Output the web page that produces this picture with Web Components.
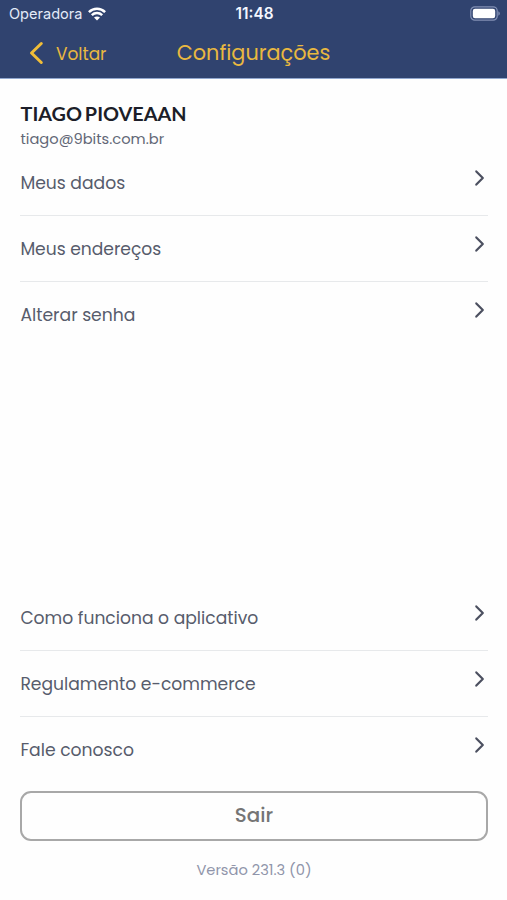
<!DOCTYPE html>
<html lang="pt-BR">
<head>
<meta charset="utf-8">
<meta name="viewport" content="width=device-width, initial-scale=1">
<title>Configurações</title>
<style>
html,body{margin:0;height:100%;background:#fefefe}
body{font-family:Poppins,Inter,"Liberation Sans",sans-serif;overflow:hidden}
</style>
</head>
<body>
<settings-screen></settings-screen>
<script>
const define = (name, html, setup) => customElements.define(name, class extends HTMLElement {
  constructor() {
    super();
    this.attachShadow({ mode: 'open' }).innerHTML = html;
  }
  connectedCallback() { if (setup) setup(this); }
});

// One line of text, sized so that it spans the width given in "span".
define('fitted-text', `<style>
:host{display:block;white-space:nowrap;line-height:22px}
span{display:inline-block}
</style><span></span>`, el => {
  const s = el.shadowRoot.querySelector('span');
  s.textContent = el.getAttribute('label');
  const target = Number(el.getAttribute('span'));
  if (!target) return;
  const size = parseFloat(getComputedStyle(s).fontSize);
  s.style.fontSize = (size * target / s.getBoundingClientRect().width).toFixed(2) + 'px';
});

define('status-bar', `<style>
:host{display:grid;grid-template-columns:1fr auto 1fr;align-items:center;height:27px;padding:0 7px 0 9px;color:#e3eaf8;font:400 14px/1 Inter,sans-serif}
.left{display:flex;align-items:center;gap:6px}
.time{font-weight:600;color:#f4f7ff;margin-top:1px}
.left fitted-text{margin-top:1px}
.battery{justify-self:end;display:block}
svg{display:block}
</style>
<div class="left"><fitted-text label="Operadora" span="73.5"></fitted-text>
<svg width="18" height="14" viewBox="0 0 18 14" fill="none" stroke="#fff" stroke-width="2.5"><path d="M.9 5.1C5.5.7 12.5.7 17.1 5.1"/><path d="M3.8 8.2c3-2.8 7.4-2.8 10.4 0"/><path d="M9 13.6 6 10.6c1.7-1.6 4.3-1.6 6 0z" fill="#fff" stroke="none"/></svg></div>
<fitted-text class="time" label="11:48" span="38"></fitted-text>
<svg class="battery" width="30" height="15" viewBox="0 0 30 15"><rect x=".8" y=".8" width="26.4" height="13.4" rx="4" fill="none" stroke="#8290b4" stroke-width="1.2"/><rect x="2.8" y="2.8" width="22.4" height="9.4" rx="2.2" fill="#fff"/><path d="M28.3 5.3c2 .8 2 3.6 0 4.4z" fill="#8290b4"/></svg>`);

define('nav-bar', `<style>
:host{display:grid;grid-template-columns:1fr auto 1fr;align-items:center;height:51px;color:#e9b840}
.back{display:flex;align-items:center;gap:12px;padding:3px 0 0 29px;font-size:17px}
.back svg{margin-top:-3px}
.title{font-size:20.3px}
</style>
<div class="back"><svg width="15" height="24" viewBox="0 0 15 24" fill="none" stroke="#f0bd38" stroke-width="3" stroke-linecap="round" stroke-linejoin="round"><path d="M12.3 2.5 2.5 12l9.8 9.5"/></svg><fitted-text label="Voltar" span="50.5"></fitted-text></div>
<fitted-text class="title" label="Configurações" span="153.4"></fitted-text>`);

define('user-summary', `<style>
:host{display:block;height:71px;padding:23px 0 0 .5px;box-sizing:border-box}
.name{font:700 19.6px/22px Lato,sans-serif;color:#1c1e29;word-spacing:-2px}
.mail{font-size:14.4px;color:#626776;margin-top:3px}
</style>
<fitted-text class="name" label="TIAGO PIOVEAAN" span="166"></fitted-text>
<fitted-text class="mail" label="tiago@9bits.com.br" span="143.6"></fitted-text>`);

define('menu-row', `<style>
:host{display:flex;justify-content:space-between;align-items:center;height:66px;box-sizing:border-box;border-bottom:1px solid #e7e9eb;color:#575c6c;font-size:17px}
:host([last]){border-color:transparent}
svg{margin:0 2px 9px 0}
</style>
<slot></slot>
<svg width="12" height="18" viewBox="0 0 12 18" fill="none" stroke="#4c5060" stroke-width="2.2" stroke-linecap="round" stroke-linejoin="round"><path d="M2.3 2.4 8.8 9l-6.5 6.6"/></svg>`);

define('outline-button', `<style>
:host{display:block}
button{display:flex;align-items:center;justify-content:center;width:100%;height:50px;box-sizing:border-box;background:none;border:2px solid #a8a8a8;border-radius:11px;padding:0 0 1px;color:#757575;font:500 18.8px/1 Poppins,Inter,sans-serif}
</style><button><slot></slot></button>`);

define('settings-screen', `<style>
:host{display:flex;flex-direction:column;height:900px;background:#fefefe}
header{background:#30436f;border-bottom:1px solid #91a8cf;height:78px;flex:none}
main{flex:1;display:flex;flex-direction:column;padding:0 19px 0 20px}
menu-row fitted-text{padding:1px 0 0 .4px}
.bottom{margin-top:auto}
outline-button{margin-top:8px}
footer{height:59px;padding-bottom:2px;box-sizing:border-box;display:flex;justify-content:center;align-items:center;color:#9095aa;font-size:14.6px}
</style>
<header><status-bar></status-bar><nav-bar></nav-bar></header>
<main>
<user-summary></user-summary>
<nav>
<menu-row><fitted-text label="Meus dados" span="104.8"></fitted-text></menu-row>
<menu-row><fitted-text label="Meus endereços" span="141"></fitted-text></menu-row>
<menu-row last><fitted-text label="Alterar senha" span="115"></fitted-text></menu-row>
</nav>
<nav class="bottom">
<menu-row><fitted-text label="Como funciona o aplicativo" span="238"></fitted-text></menu-row>
<menu-row><fitted-text label="Regulamento e-commerce" span="235.4"></fitted-text></menu-row>
<menu-row last><fitted-text label="Fale conosco" span="113.6"></fitted-text></menu-row>
</nav>
<outline-button><fitted-text label="Sair" span="38.3"></fitted-text></outline-button>
<footer><fitted-text label="Versão 231.3 (0)" span="115.3"></fitted-text></footer>
</main>`);
</script>
</body>
</html>
